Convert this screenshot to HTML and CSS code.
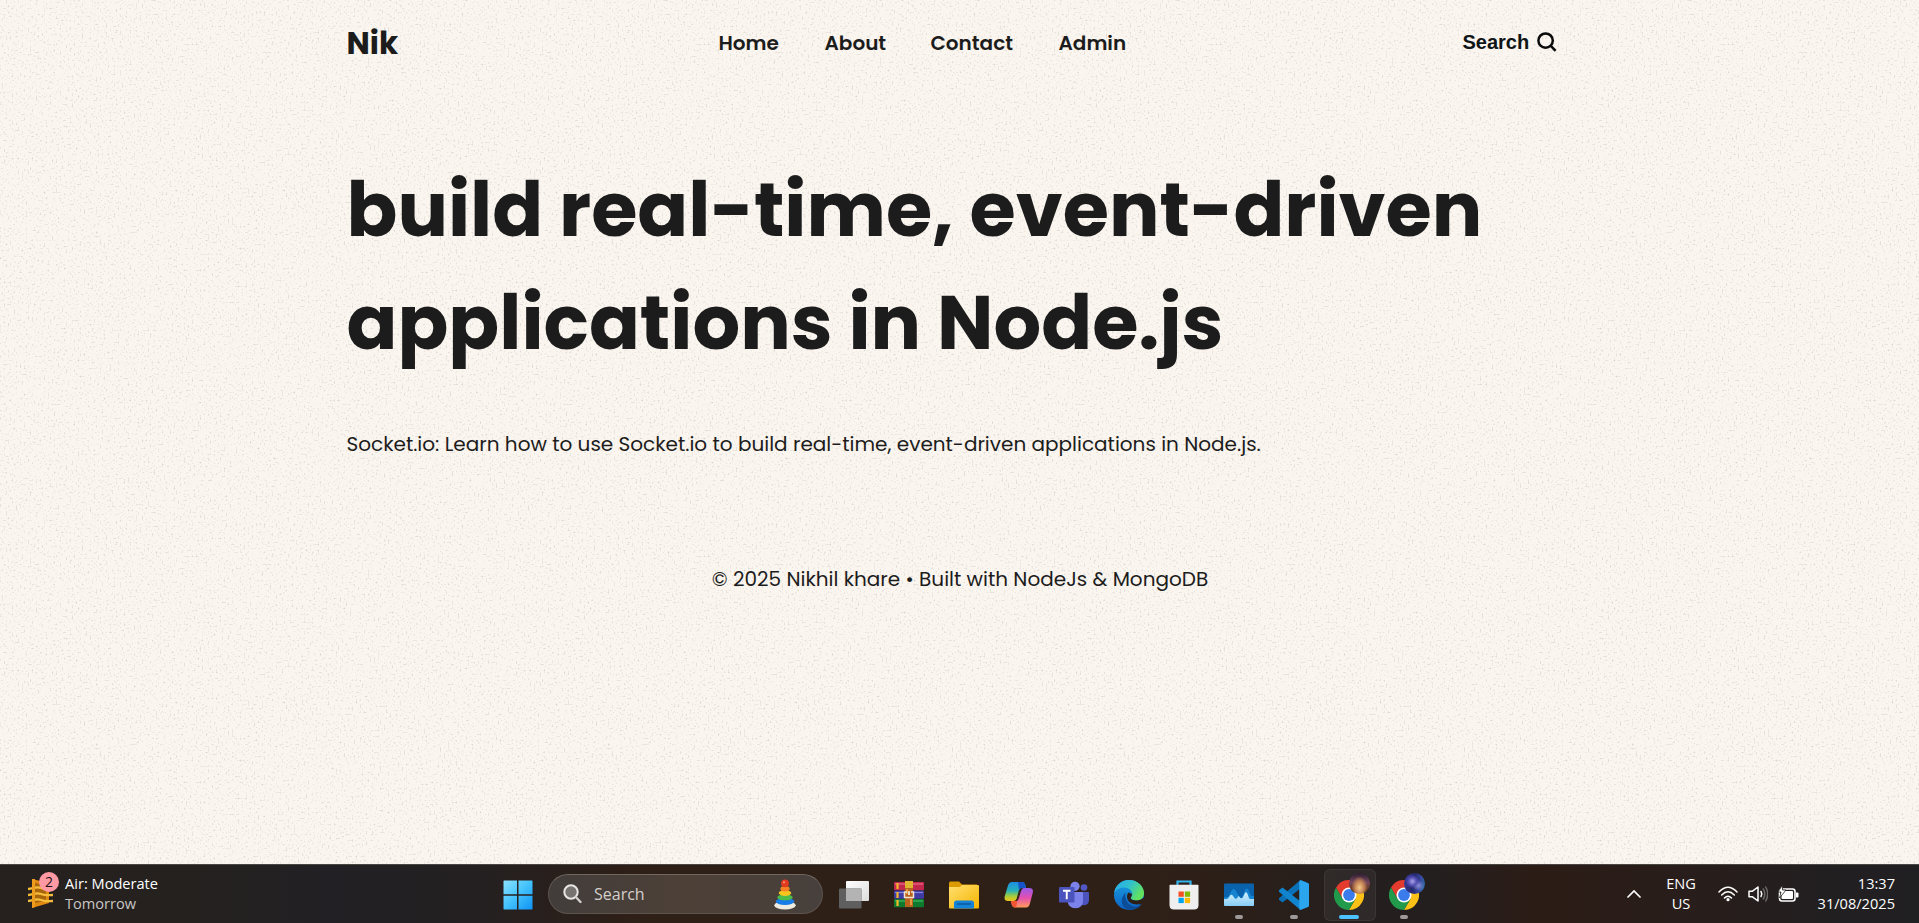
FILE: index.html
```html
<!DOCTYPE html>
<html lang="en">
<head>
<meta charset="utf-8">
<title>Nik</title>
<link rel="stylesheet" href="styles.css">
</head>
<body>
<svg class="grain" aria-hidden="true">
  <filter id="grain" x="0" y="0" width="100%" height="100%" color-interpolation-filters="sRGB">
    <feTurbulence type="fractalNoise" baseFrequency="0.5" numOctaves="3" seed="4"/>
    <feColorMatrix values="0 0 0 0 0.5  0 0 0 0 0.49  0 0 0 0 0.47  1 0 0 0 -0.575"/>
  </filter>
  <rect width="100%" height="100%" filter="url(#grain)"/>
</svg>
<div class="page">
  <header class="site-header">
    <a class="logo">Nik</a>
    <nav class="nav"><a class="n-home">Home</a><a class="n-about">About</a><a class="n-contact">Contact</a><a class="n-admin">Admin</a></nav>
    <button class="search-btn">Search
      <svg width="20" height="20" viewBox="0 0 20 20" fill="none" stroke="#0b0b0b" stroke-width="2.5"><circle cx="8.6" cy="8.6" r="7.2"/><path d="M13.6 13.6 18.6 18.8"/></svg>
    </button>
  </header>
  <main>
    <h1 class="title"><span class="line">build real-time, event-driven</span> <span class="line">applications in Node.js</span></h1>
    <p class="body-text">Socket.io: Learn how to use Socket.io to build real-time, event-driven applications in Node.js.</p>
  </main>
  <footer class="footer">© 2025 Nikhil khare • Built with NodeJs &amp; MongoDB</footer>
</div>

<div class="taskbar">
  <div class="weather">
    <div class="weather-icon">
      <svg width="26" height="31" viewBox="0 0 26 31"><path d="M4 1 21 5v20L4 30z" fill="#e08a12"/><path d="M7 5l11 2v16L7 25z" fill="#a9650b"/><g fill="none" stroke="#f5bd3c" stroke-width="2.3"><path d="M0 11c7-1 8-3 13-1s8 1 12 1M0 17c7-1 8-3 13-1s8 1 12 1M0 23c7-1 8-3 13-1s8 1 12 1"/></g><path d="M4 1h3v28l-3 1z" fill="#ed9c1d"/></svg>
      <span class="badge">2</span>
    </div>
    <div class="stack"><span class="w1">Air: Moderate</span><span class="w2">Tomorrow</span></div>
  </div>
  <div class="apps">
    <div class="slot">
      <svg width="30" height="30" viewBox="0 0 30 30"><defs><linearGradient id="win" x1="0" y1="0" x2="30" y2="30" gradientUnits="userSpaceOnUse"><stop offset="0" stop-color="#8ee4ff"/><stop offset=".5" stop-color="#42c2fb"/><stop offset="1" stop-color="#0d90f5"/></linearGradient></defs><path fill="url(#win)" d="M1 .5h13v13.700H.5V1zM15.500.5H29l.5.5v13.200h-14zM.5 15.700H14v13.800H1l-.5-.5zM15.500 15.700h14V29l-.5.5H15.500z"/></svg>
    </div>
    <div class="searchbox">
      <svg width="19" height="20" viewBox="0 0 19 20"><circle cx="8" cy="8" r="6.700" fill="#777370" stroke="#e8e6e4" stroke-width="2"/><path d="M12.800 13 17.500 18" stroke="#d2d0ce" stroke-width="2.400" stroke-linecap="round"/></svg>
      <span class="search-label">Search</span>
      <svg class="toy" width="22" height="31" viewBox="0 0 22 31"><ellipse cx="11" cy="26.300" rx="10.700" ry="4.300" fill="#eeebe0"/><ellipse cx="11" cy="22.500" rx="9.200" ry="3.400" fill="#187de6"/><ellipse cx="11" cy="18.300" rx="7.700" ry="3" fill="#4dbc4a"/><ellipse cx="11" cy="14" rx="6.300" ry="2.900" fill="#f7c51e"/><ellipse cx="11" cy="9.700" rx="4.600" ry="2.700" fill="#f78325"/><circle cx="11" cy="4.300" r="3.900" fill="#e23b1f"/><circle cx="10" cy="3.200" r="1" fill="#ff9a7a"/></svg>
    </div>
    <div class="slot first">
      <svg width="30" height="30" viewBox="0 0 30 30"><defs><linearGradient id="tv" x1="0" y1="0" x2="1" y2="1"><stop offset="0" stop-color="#fff"/><stop offset="1" stop-color="#dcdcdc"/></linearGradient></defs><rect x="7" y="1" width="23" height="20" rx="1" fill="url(#tv)"/><rect x="0" y="8.500" width="22.500" height="20" rx="1" fill="#5f5f5f"/><path d="M7 8.500h15.500V21H7z" fill="#b3b3b3"/></svg>
    </div>
    <div class="slot">
      <svg width="30" height="30" viewBox="0 0 30 30"><rect y="2" width="30" height="8.300" rx="1" fill="#c2284c"/><path d="M1 4h28" stroke="#ea6a86" stroke-width="1.200"/><rect y="10.500" width="30" height="8.300" rx="1" fill="#3f3ba2"/><path d="M1 12.500h28" stroke="#8583da" stroke-width="1.200"/><rect y="19" width="30" height="8.300" rx="1" fill="#0d7a2e"/><path d="M1 21h28" stroke="#40b963" stroke-width="1.200"/><path d="M3.500 3v6M3.500 12v6M3.500 20v6" stroke="#f4b62a" stroke-width="2.200"/><rect x="11" y="1" width="8" height="26" fill="#b8621e"/><path d="M11 1h8v7h-8z" fill="#dfb52f"/><path d="M12 9h2v5h-2zM16 19h2v6h-2z" fill="#e39a42"/><path d="M13 12h-2.500v5.500h9V12H17" fill="none" stroke="#f1e4d2" stroke-width="1.500"/><path d="M15 11v4" stroke="#e9d9c2" stroke-width="2"/></svg>
    </div>
    <div class="slot">
      <svg width="30" height="30" viewBox="0 0 30 30"><defs><linearGradient id="fo" x1="0" y1="0" x2="1" y2="1"><stop offset="0" stop-color="#ffdf70"/><stop offset="1" stop-color="#f7b500"/></linearGradient></defs><path d="M0 3q0-1.500 1.500-1.500H10L13 4.500h15V15H0z" fill="#dc9a03"/><path d="M0 7h11l2-2h16q1 0 1 1v21.500q0 1-1 1H1q-1 0-1-1z" fill="url(#fo)"/><path d="M5 28.500V23q0-2.500 2.500-2.500h15Q25 20.500 25 23v5.500z" fill="#1583d8"/><path d="M8 24h14" stroke="#0b5899" stroke-width="1.400"/></svg>
    </div>
    <div class="slot">
      <svg width="30" height="30" viewBox="0 0 30 30"><defs><linearGradient id="c1" x1="0" y1="0" x2="0" y2="1"><stop offset="0" stop-color="#1d8de6"/><stop offset=".45" stop-color="#26b0b8"/><stop offset=".75" stop-color="#a5cc3a"/><stop offset="1" stop-color="#f3c51c"/></linearGradient><linearGradient id="c2" x1="0" y1="0" x2="0" y2="1"><stop offset="0" stop-color="#9a5bea"/><stop offset=".5" stop-color="#e34fb0"/><stop offset="1" stop-color="#ff9b58"/></linearGradient></defs><path d="M8 2h10q2.500 0 3.300 3L22 8h-4q-2.500 0-3.300 3l-2 7.500q-.8 2.500-3.300 2.500H4q-4.500 0-3.200-5L4 5.500Q5 2 8 2z" fill="url(#c1)"/><path d="M14 2h4q2.500 0 3.300 3L22 8h-4q-2 0-3 2z" fill="#1554c9"/><path d="M22 27.500H11q-2.500 0-3.300-3L7 21h3.500q2.500 0 3.200-2.500l2.500-8Q17 8 19.500 8H25q5 0 3.700 5L25.800 24q-1 3.500-3.800 3.500z" fill="url(#c2)"/><path d="M7 21h3.500q2.400 0 3.200-2.500l-1.500 9H11q-2.500 0-3.300-3z" fill="#f25434"/><path d="M17.300 8.500h2.200q-1.900.3-2.500 2.500l-2.400 8q-.8 2-2.300 2h-1.800q2.200-.2 3-2.500l2-7q.6-2.300 1.800-3z" fill="#2e1f16"/></svg>
    </div>
    <div class="slot">
      <svg width="30" height="30" viewBox="0 0 30 30"><circle cx="25" cy="7.500" r="3.300" fill="#5158c4"/><path d="M20 12h9q1 0 1 1v7q0 5-5 5.200-4-.2-5-4z" fill="#4b53bc"/><circle cx="16" cy="6.300" r="4.600" fill="#7b83eb"/><path d="M9 12h14q1 0 1 1v8q0 7-7.500 7.300Q9 28 8.500 21z" fill="#7b83eb"/><rect y="7" width="15.500" height="15.500" rx="1.300" fill="#4b53bc"/><path d="M4 10.800h7.500M7.750 11v8.300" stroke="#fff" stroke-width="1.900"/></svg>
    </div>
    <div class="slot">
      <svg width="30" height="30" viewBox="0 0 30 30"><defs><linearGradient id="e1" x1="0" y1="0" x2="1" y2=".5"><stop offset="0" stop-color="#2aa9ee"/><stop offset=".5" stop-color="#2fc0cf"/><stop offset="1" stop-color="#63e35b"/></linearGradient><linearGradient id="e2" x1="0" y1="0" x2="0" y2="1"><stop offset="0" stop-color="#1ba0e0"/><stop offset="1" stop-color="#0c62c4"/></linearGradient></defs><circle cx="15" cy="15" r="15" fill="url(#e2)"/><path d="M.2 13C1 6 7 0 15 0c9 0 15 6.500 15 13 0 5-3.500 7.500-7.500 7.500-3.500 0-5.500-1.300-5.500-2.500s1.300-1.500 1.300-4c0-3.500-3.500-6.500-8-6.500C5 7.500 1.500 10 .2 13z" fill="url(#e1)"/><path d="M11.500 12.500c-1.500 7 3 13.500 9.500 14 3 .2 6-1.500 7-2.500C25 28 20.500 30 16 30 9 29 4 21 11.500 12.500z" fill="#0d4c96"/><path d="M18 14c0 2.500-1.300 2.800-1.300 4s2 2.500 5.800 2.500c3 0 5-1 7.500-3 .3 2-1.500 6-3 6.500C20 25.500 13 23 13 16.500c0-1.500.6-3 1.600-4Z" fill="#2e1f16"/></svg>
    </div>
    <div class="slot">
      <svg width="30" height="30" viewBox="0 0 30 30"><path d="M8.500 6.500V1.500h13v5" fill="none" stroke="#35b5ee" stroke-width="2.200"/><path d="M.5 5.500q0-.8.800-.8h27.400q.8 0 .8.800V25q0 4.500-4.500 4.500H5Q.5 29.500.5 25z" fill="#efefef"/><path d="M9.500 11.500h5.300v5.300H9.500z" fill="#f25022"/><path d="M15.800 11.500h5.300v5.300h-5.300z" fill="#7fba00"/><path d="M9.500 17.800h5.300v5.300H9.500z" fill="#00a4ef"/><path d="M15.800 17.800h5.300v5.300h-5.300z" fill="#ffb900"/></svg>
    </div>
    <div class="slot running">
      <svg width="30" height="30" viewBox="0 0 30 30"><defs><linearGradient id="tm" x1="0" y1="0" x2="0" y2="1"><stop offset="0" stop-color="#d4effc"/><stop offset="1" stop-color="#86cdf6"/></linearGradient></defs><rect y="3.500" width="30" height="22.500" rx="1" fill="#0a62ad"/><path d="M0 17h4l4-7q2-2 3.500.5L15 16l2.500 3L21 10q1.500-3 3.500 0l2.500 6h3v9H0z" fill="#1583d0"/><path d="M0 19h2.500q1.500 0 2.500-2l1.500-2q1.500-1 2.500 1l2 2.500q1.300 1 2.500-1l1-1.500 2 2q1.500 1 2.500-1l2-4q1.500-2 2.500 1l1.500 4q.5 1 1.500 1H30v6q0 1-1 1H1q-1 0-1-1z" fill="url(#tm)"/></svg>
    </div>
    <div class="slot running">
      <svg width="30" height="30" viewBox="0 0 30 30"><path d="M21.500 0v8.500L3.500 22.500 0 19.700q-.5-.7 0-1.400z" fill="#0a71b8"/><path d="M3.500 7.500 0 10.300q-.5.700 0 1.400L21.500 30v-8.500z" fill="#1184cf"/><path d="M21.500 0 29 3q1 .5 1 1.500v21q0 1-1 1.500l-7.500 3q-1.500-.3-1.300-2.500V2.500Q20 .5 21.500 0z" fill="#2aa5ee"/></svg>
    </div>
    <div class="slot running active">
      <svg width="30" height="30" viewBox="0 0 30 30"><use href="#chrome"/></svg>
      <span class="avatar a1"></span>
    </div>
    <div class="slot running">
      <svg width="30" height="30" viewBox="0 0 30 30"><g id="chrome"><path d="M2 7.500A15 15 0 0 1 28 7.500H15L8.500 18.800z" fill="#e33b2e"/><path d="M2 7.500 8.500 18.800 15 22.500 15 30A15 15 0 0 1 2 7.500z" fill="#229a4b"/><path d="M28 7.500A15 15 0 0 1 15 30L21.500 18.800 15 7.500z" fill="#fbc116"/><path d="M15 30 21.500 18.800 15 20l-3 3z" fill="#229a4b"/><circle cx="15" cy="15" r="7.500" fill="#fff"/><circle cx="15" cy="15" r="5.900" fill="#3a7ceb"/></g></svg>
      <span class="avatar a2"></span>
    </div>
  </div>
  <div class="tray">
    <svg class="chev" width="14" height="9" viewBox="0 0 14 9"><path d="M1 8l6-6 6 6" fill="none" stroke="#fff" stroke-width="1.700" stroke-linecap="round"/></svg>
    <div class="stack lang"><span class="eng">ENG</span><span class="us">US</span></div>
    <svg width="20" height="16" viewBox="0 0 20 16" fill="none" stroke="#fff" stroke-width="1.500" stroke-linecap="round"><path d="M1 6q9-9.500 18 0M3.700 9q6.300-6.500 12.600 0M6.500 12q3.500-3.600 7 0"/><circle cx="10" cy="13.700" r="1.600" fill="#fff" stroke="none"/></svg>
    <svg class="vol" width="20" height="18" viewBox="0 0 20 18" fill="none" stroke="#fff" stroke-width="1.500" stroke-linejoin="round" stroke-linecap="round"><path d="M1 6.200h3.500L10 2v14l-5.500-4.200H1z"/><path d="M13 6.500q1.600 2.500 0 5"/><path d="M15.300 4q3 5 0 10M17.700 2q4 7 0 14" stroke="#6b6868"/></svg>
    <svg class="battery" width="21" height="18" viewBox="0 0 21 18"><rect x="1.500" y="4" width="15.500" height="12" rx="2.500" fill="none" stroke="#fff" stroke-width="1.600"/><rect x="3.500" y="6" width="11.500" height="8" rx="1" fill="#fff"/><path d="M18 7.500h1.500q1 0 1 1v3q0 1-1 1H18z" fill="#fff"/><path d="M4.500 0 0 7h3l-1.500 6L8 5H4.500z" fill="#fff" stroke="#231f1f" stroke-width=".8"/></svg>
    <div class="stack clock"><span class="time">13:37</span><span class="date">31/08/2025</span></div>
  </div>
</div>
</body>
</html>
```
FILE: styles.css
```css
* { box-sizing: border-box; }
body {
  margin: 0;
  height: 923px;
  overflow: hidden;
  display: flex;
  flex-direction: column;
  background: #faf5ee;
  color: #1c1c1c;
  font-family: Poppins, Inter, sans-serif;
}
.grain { position: absolute; inset: 0; width: 100%; height: 864px; z-index: -1; }
.page { flex: 1; width: 1226px; margin: 0 auto; }
.site-header { display: flex; align-items: center; height: 86px; }
.logo { width: 372px; font-size: 31px; font-weight: 700; line-height: 40px; }
.nav { display: flex; flex: 1; font-size: 20px; font-weight: 600; line-height: 30px; }
.n-home { width: 106px; }
.n-about { width: 106px; }
.n-contact { width: 128px; }
.search-btn {
  display: flex; gap: 8px; align-items: center;
  width: 98px; margin: 0 12px 2px 0; padding: 0; border: 0; background: none; color: #0f1417;
  font: bold 20px/30px "Liberation Sans", Arial, sans-serif;
}
.title { margin: 67px 0 0; font-size: 75px; line-height: 113px; font-weight: 700; white-space: nowrap; }
.line { display: block; }
.body-text { margin: 50px 0 0; font-size: 20px; line-height: 30px; white-space: nowrap; }
.footer { margin: 105px -1px 0 0; font-size: 20px; line-height: 30px; text-align: center; white-space: nowrap; }

.taskbar {
  display: flex;
  height: 59px;
  border-top: 1px solid #4a4644;
  background: linear-gradient(90deg, #26211f 0, #25211f 10%, #222024 17%, #242021 25%, #2e1f17 33%, #2f2017 60%, #2a1f1a 66%, #241f1e 70%, #241f1f 75%, #2c1c16 80%, #271e1c 90%, #221f21 95%, #201f21 100%);
  color: #fff;
  font-family: "Segoe UI", "Open Sans", sans-serif;
  font-size: 14.600px;
}
.weather { display: flex; width: 490px; padding: 13px 0 0 28px; gap: 11px; }
.weather-icon { position: relative; width: 26px; }
.badge {
  position: absolute; left: 11px; top: -6px; width: 20px; height: 20px;
  border-radius: 50%; background: #ff99a4; color: #1b1013; font-size: 14px; line-height: 20px; text-align: center;
}
.stack { display: flex; flex-direction: column; line-height: 20px; white-space: nowrap; }
.weather .stack { margin-top: -5px; }
.w2 { color: #c9c6c4; }
.apps { display: flex; }
.slot { position: relative; display: flex; align-items: center; justify-content: center; width: 55px; height: 58px; padding-top: 1px; }
.slot.first { margin-left: 3.500px; }
.searchbox {
  display: flex; align-items: center; width: 275px; height: 40px; margin: 9px 0 0 3px; padding: 0 26px 0 14px;
  border-radius: 20px; border: 1px solid #5d544e; border-top-color: #71675f;
  background: linear-gradient(90deg, #423d3b, #4d4037 50%, #47403c);
}
.search-label { flex: 1; margin-left: 12px; font-size: 16px; color: #d3cfcc; }
.running::after {
  content: ""; position: absolute; left: 23px; bottom: 4px; width: 8px; height: 4px; border-radius: 2px; background: #9d9a99;
}
.active::before {
  content: ""; position: absolute; left: 2px; top: 4px; width: 50px; height: 50px; border-radius: 6px;
  background: rgba(255,255,255,.05); border: 1px solid rgba(255,255,255,.06);
}
.active::after { left: 17px; width: 20px; background: #4cc2ff; }
.slot svg { position: relative; }
.avatar { position: absolute; left: 27px; top: 8px; width: 21px; height: 21px; border-radius: 50%; }
.a1 { background: radial-gradient(ellipse at 50% 70%, #f5cb8b 0, #c58355 30%, transparent 55%), linear-gradient(#2c1d2d, #75465f 45%, #6b3b22 75%, #0d0808); }
.a2 { background: radial-gradient(ellipse at 40% 40%, #aaa4e8 0, #5751b6 22%, transparent 38%), radial-gradient(ellipse at 68% 60%, #8b8fd8 0, transparent 30%), linear-gradient(100deg, #3b3b9c, #24286c 45%, #38449b 70%, #2c7ba3); }
.tray { display: flex; margin-left: auto; padding: 0 24px 2px 0; align-items: center; }
.tray svg { margin-top: 1px; }
.tray .chev { margin-right: 26px; }
.lang { width: 28px; margin-right: 23px; text-align: center; align-items: center; }
.tray .vol { margin: 1px 10px 0; }
.clock { width: 76px; margin-left: 20px; align-items: flex-end; }
```
